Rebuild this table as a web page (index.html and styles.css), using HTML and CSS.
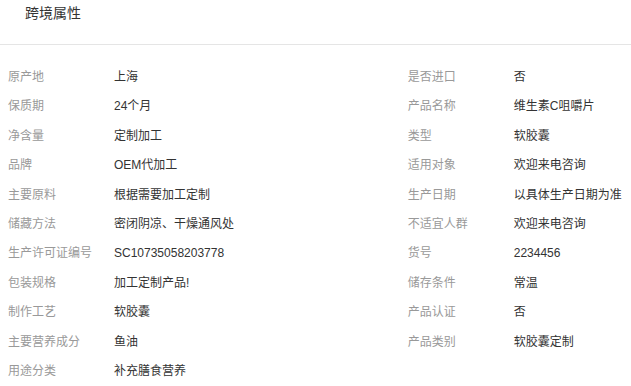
FILE: index.html
```html
<!DOCTYPE html>
<html lang="zh">
<head>
<meta charset="utf-8">
<link rel="stylesheet" href="styles.css">
</head>
<body>
<div class="header"><span class="title">跨境属性</span></div>
<div class="attrs">
  <div class="cell"><span class="k">原产地</span><span class="v">上海</span></div>
  <div class="cell"><span class="k">是否进口</span><span class="v">否</span></div>
  <div class="cell"><span class="k">保质期</span><span class="v">24个月</span></div>
  <div class="cell"><span class="k">产品名称</span><span class="v">维生素C咀嚼片</span></div>
  <div class="cell"><span class="k">净含量</span><span class="v">定制加工</span></div>
  <div class="cell"><span class="k">类型</span><span class="v">软胶囊</span></div>
  <div class="cell"><span class="k">品牌</span><span class="v">OEM代加工</span></div>
  <div class="cell"><span class="k">适用对象</span><span class="v">欢迎来电咨询</span></div>
  <div class="cell"><span class="k">主要原料</span><span class="v">根据需要加工定制</span></div>
  <div class="cell"><span class="k">生产日期</span><span class="v">以具体生产日期为准</span></div>
  <div class="cell"><span class="k">储藏方法</span><span class="v">密闭阴凉、干燥通风处</span></div>
  <div class="cell"><span class="k">不适宜人群</span><span class="v">欢迎来电咨询</span></div>
  <div class="cell"><span class="k">生产许可证编号</span><span class="v">SC10735058203778</span></div>
  <div class="cell"><span class="k">货号</span><span class="v">2234456</span></div>
  <div class="cell"><span class="k">包装规格</span><span class="v">加工定制产品!</span></div>
  <div class="cell"><span class="k">储存条件</span><span class="v">常温</span></div>
  <div class="cell"><span class="k">制作工艺</span><span class="v">软胶囊</span></div>
  <div class="cell"><span class="k">产品认证</span><span class="v">否</span></div>
  <div class="cell"><span class="k">主要营养成分</span><span class="v">鱼油</span></div>
  <div class="cell"><span class="k">产品类别</span><span class="v">软胶囊定制</span></div>
  <div class="cell"><span class="k">用途分类</span><span class="v">补充膳食营养</span></div>
</div>
</body>
</html>
```
FILE: styles.css
```css
html, body {
  margin: 0;
  padding: 0;
  background: #fff;
  font-family: "Liberation Sans", "Noto Sans CJK SC", sans-serif;
}
.header {
  height: 45px;
  border-bottom: 1px solid #e5e5e5;
  padding-left: 25px;
  box-sizing: border-box;
}
.title {
  display: block;
  padding-top: 4px;
  line-height: 18px;
  font-size: 14px;
  color: #333;
}
.attrs {
  display: grid;
  grid-template-columns: 65% 35%;
  margin: 18px 8px 0 8px;
  grid-auto-rows: 29.4px;
}
.cell {
  display: flex;
  align-items: center;
  font-size: 12px;
  line-height: 29.4px;
  white-space: nowrap;
}
.k {
  width: 106px;
  flex: none;
  color: #999;
}
.v {
  color: #333;
}
```
